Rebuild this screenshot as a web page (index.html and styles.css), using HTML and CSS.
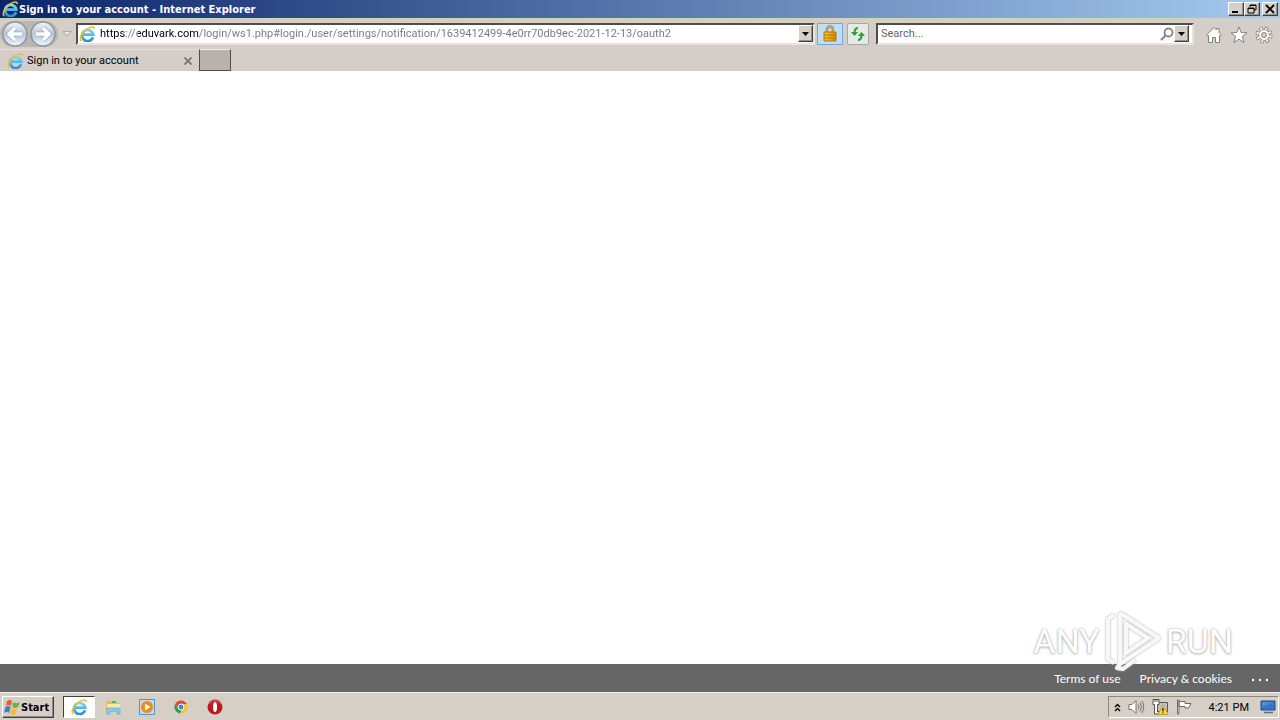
FILE: index.html
```html
<!DOCTYPE html>
<html lang="en">
<head>
<meta charset="utf-8">
<title>Sign in to your account</title>
<link rel="stylesheet" href="styles.css">
</head>
<body>
<svg class="defs" aria-hidden="true">
  <defs>
    <linearGradient id="blue" x1="0" y1="0" x2="0" y2="1"><stop offset="0" stop-color="#7ad8fa"/><stop offset="1" stop-color="#2a8fd8"/></linearGradient>
    <linearGradient id="disc" x1="0" y1="0" x2="0" y2="1"><stop offset="0" stop-color="#f4f6fa"/><stop offset=".5" stop-color="#b9c6da"/><stop offset="1" stop-color="#eef8fc"/></linearGradient>
    <linearGradient id="gold" x1="0" y1="0" x2="1" y2="0"><stop offset="0" stop-color="#f8c830"/><stop offset="1" stop-color="#d08808"/></linearGradient>
    <symbol id="ie" viewBox="0 0 16 16">
      <path d="M14 11.200A5.600 5.600 0 1 1 14.200 8.600H4.500" fill="none" stroke="url(#blue)" stroke-width="2.800"/>
      <path d="M2.500 15C-.8 13.500 3 6.500 7.500 3.300c4-2.800 8-3.400 7.500-.1" fill="none" stroke="#f0bd24" stroke-width="1.600"/>
    </symbol>
  </defs>
</svg>
<div class="window">
  <header class="titlebar">
    <svg class="icon16"><use href="#ie"/></svg>
    <h1 class="title">Sign in to your account - Internet Explorer</h1>
    <div class="winbuttons">
      <button class="winbtn" aria-label="Minimize"><svg width="12" height="10"><path d="M2 8h6" stroke="#000" stroke-width="2"/></svg></button>
      <button class="winbtn" aria-label="Restore"><svg width="12" height="10"><path d="M4 3V1h6v5H8M4 1.500h6M2 4h6v5H2zM2 4.500h6" fill="none" stroke="#000"/></svg></button>
      <button class="winbtn close" aria-label="Close"><svg width="12" height="10"><path d="M2 1l8 8M10 1L2 9" stroke="#000" stroke-width="1.800"/></svg></button>
    </div>
  </header>
  <nav class="navbar" aria-label="Browser">
    <div class="history">
      <button class="round" aria-label="Back"><svg width="26" height="26"><circle cx="13" cy="13" r="12" fill="url(#disc)" stroke="#8f959e" stroke-width="1.500"/><path d="M13 7l-6 6 6 6M8 13h12" fill="none" stroke="#9aa9c0" stroke-width="5"/><path d="M13 7l-6 6 6 6M8 13h12" fill="none" stroke="#fff" stroke-width="3.400"/></svg></button>
      <button class="round" aria-label="Forward"><svg width="26" height="26"><circle cx="13" cy="13" r="12" fill="url(#disc)" stroke="#8f959e" stroke-width="1.500"/><path d="M13 7l6 6-6 6M18 13H6" fill="none" stroke="#9aa9c0" stroke-width="5"/><path d="M13 7l6 6-6 6M18 13H6" fill="none" stroke="#fff" stroke-width="3.400"/></svg></button>
    </div>
    <button class="plain recent" aria-label="Recent pages"><svg width="10" height="6"><path d="M1 .5h8L5 5z" fill="#e8e4df" stroke="#aaa6a2"/></svg></button>
    <div class="field address">
      <svg class="icon16"><use href="#ie"/></svg>
      <input class="url" aria-label="Address" value="https://eduvark.com/login/ws1.php#login./user/settings/notification/1639412499-4e0rr70db9ec-2021-12-13/oauth2">
      <button class="drop" aria-label="Show addresses"><svg width="7" height="4"><path d="M0 0h7L3.500 4z"/></svg></button>
    </div>
    <button class="lock" aria-label="Security report"><svg width="14" height="17"><path d="M4 8V4.500a3 3 0 0 1 6 0V8" fill="none" stroke="#8c7a48" stroke-width="2.400"/><path d="M4 8V4.500a3 3 0 0 1 6 0V8" fill="none" stroke="#e6d9a0" stroke-width=".8"/><path d="M1 7h12v9H1z" fill="url(#gold)" stroke="#b07a10"/><path d="M1 10h12M1 13h12" stroke="#b8780c"/></svg></button>
    <button class="refresh" aria-label="Refresh"><svg width="14" height="14"><path d="M7 1C4 1 3.500 3 3.500 6M7 13c3 0 3.500-2 3.500-5" fill="none" stroke="#2f9a35" stroke-width="2"/><path d="M0 5h7L3.500 9zM7 9h7l-3.500-4z" fill="#2f9a35"/></svg></button>
    <div class="field search">
      <input class="query" aria-label="Search" placeholder="Search...">
      <button class="plain" aria-label="Search"><svg width="14" height="14"><circle cx="8.500" cy="5.500" r="4" fill="#fff" stroke="#85858b" stroke-width="1.800"/><path d="M5.500 8.500L1 13" stroke="#85858b" stroke-width="2.200"/></svg></button>
      <button class="drop" aria-label="Search providers"><svg width="7" height="4"><path d="M0 0h7L3.500 4z"/></svg></button>
    </div>
    <div class="tools">
      <button class="plain" aria-label="Home"><svg width="18" height="18"><path d="M1.500 9L9 1.500l2.500 2.500V2.500h2.500V6.500L16.500 9l-1 1-1-.5v7h-4v-5h-3v5h-4v-7l-1 .5z" fill="#fff" stroke="#85817d"/></svg></button>
      <button class="plain" aria-label="Favorites"><svg width="18" height="18"><path d="M9 1l2.200 5.500 5.800.3-4.500 3.700L14 16.500 9 13.200 4 16.500l1.500-6L1 6.800l5.800-.3z" fill="#fff" stroke="#85817d"/></svg></button>
      <button class="plain" aria-label="Tools"><svg width="18" height="18"><circle cx="9" cy="9" r="6.500" fill="none" stroke="#85817d" stroke-width="4" stroke-dasharray="3 2.100"/><circle cx="9" cy="9" r="5.500" fill="#fff" stroke="#85817d"/><circle cx="9" cy="9" r="6.500" fill="none" stroke="#fff" stroke-width="2.600" stroke-dasharray="1.600 3.500" stroke-dashoffset="-.7"/><circle cx="9" cy="9" r="2.500" fill="#d5cec6" stroke="#85817d"/></svg></button>
    </div>
  </nav>
  <div class="tabs">
    <div class="tab"><svg class="icon16"><use href="#ie"/></svg><span class="tabname">Sign in to your account</span><button class="plain" aria-label="Close tab"><svg width="8" height="8"><path d="M.5.5l7 7M7.500.5l-7 7" stroke="#77736f" stroke-width="1.800"/></svg></button></div>
    <button class="newtab" aria-label="New tab"></button>
  </div>
  <main class="page">
    <div class="watermark" aria-hidden="true">
      <span>ANY</span>
      <svg width="58" height="62" viewBox="0 0 58 62"><path class="mark" d="M16 3l39 25L16 54V3M22 14l22 14-22 15zM10 5L4 9v40l6 4M16 54l-3 4 6 1 12-9"/></svg>
      <span>RUN</span>
    </div>
  </main>
  <footer class="legal">
    <a class="link" href="#terms">Terms of use</a>
    <a class="link" href="#privacy">Privacy &amp; cookies</a>
    <button class="more" aria-label="More"><svg width="18" height="4" fill="#fff"><circle cx="2" cy="2" r="1.200"/><circle cx="9" cy="2" r="1.200"/><circle cx="16" cy="2" r="1.200"/></svg></button>
  </footer>
  <div class="taskbar">
    <button class="start"><svg width="17" height="16"><path d="M3 2q3-2 5 0L7 7Q4 5 2 7z" fill="#e9602c"/><path d="M9 3q3 2 7 0l-2 5q-3 2-5.500 0z" fill="#6eb33c"/><path d="M1.500 8q3-2 5 0L5 14q-2-2-5 0z" fill="#3b80cf"/><path d="M7.500 9q3 2 5.500 0l-1.500 6q-3 2-5.500 0z" fill="#f5bd2c"/></svg><span>Start</span></button>
    <div class="apps">
      <button class="app active" aria-label="Internet Explorer"><svg class="icon16"><use href="#ie"/></svg></button>
      <button class="app" aria-label="Windows Explorer"><svg width="16" height="16"><path d="M1 2h5l1 2h7v9H1z" fill="#e3bd58"/><path d="M2 5h13v7H2z" fill="#f9e9a2"/><path d="M7 2h4v2H7z" fill="#55b65d"/><path d="M2 15V9h13v6h-3v-3H5v3z" fill="#8ccbe9" stroke="#65a7cb" stroke-width=".7"/></svg></button>
      <button class="app" aria-label="Media Player"><svg width="16" height="16"><path d="M.5.5h15v15H.5z" fill="#b9ddf5" stroke="#5295ca"/><circle cx="8" cy="8" r="6" fill="#f38718"/><path d="M6 4.500L11.500 8 6 11.500z" fill="#fff"/></svg></button>
      <button class="app" aria-label="Chrome"><svg width="14" height="14"><circle cx="7" cy="7" r="6.500" fill="#f5c52c"/><path d="M1.400 3.700A6.500 6.500 0 0 1 12.700 4H7L4 8.500z" fill="#dc4a3c"/><path d="M1.400 3.700L4 8.500l3.500 1.500L6 13.500A6.500 6.500 0 0 1 1.400 3.700z" fill="#2e9d58"/><circle cx="7" cy="7" r="3" fill="#4384ea" stroke="#fff"/></svg></button>
      <button class="app" aria-label="Opera"><svg width="16" height="16"><circle cx="8" cy="8" r="7.500" fill="#bd1a20"/><path d="M2 5q6-7 12 0" fill="none" stroke="#df6a6a"/><ellipse cx="8" cy="8" rx="2" ry="5" fill="#fff"/></svg></button>
    </div>
    <div class="tray">
      <button class="plain" aria-label="Show hidden icons"><svg width="7" height="9"><path d="M1 4l2.500-2.500L6 4M1 8l2.500-2.500L6 8" fill="none" stroke="#000" stroke-width="1.400"/></svg></button>
      <button class="plain" aria-label="Volume"><svg width="17" height="16"><path d="M1 5.500h3l4-4v13l-4-4H1z" fill="#fff" stroke="#77736f"/><path d="M10 5.500q2 2.500 0 5M12 3.500q3 4.500 0 9M14 2q3.500 6 0 12" fill="none" stroke="#77736f"/></svg></button>
      <button class="plain" aria-label="Network"><svg width="17" height="16"><path d="M5.500 3.500h10v9h-10z" fill="#c2c0bd" stroke="#5c5a58"/><path d="M1 .5h6v5H5.500V13H9v2H2.500V5.500H1z" fill="#fff" stroke="#55524e"/><path d="M3 .5v2.500M5 .5v2.500" stroke="#55524e"/><path d="M11 6l5 9.500H6z" fill="#fcdc30" stroke="#b5941c" stroke-width=".7"/><path d="M11 9v3.500M11 13.500v1" stroke="#222" stroke-width="1.300"/></svg></button>
      <button class="plain" aria-label="Action Center"><svg width="17" height="16"><path d="M1.500 1h1.500v14H1.500zM3 2.500h6v2h6L12.500 9H9V7.500H3z" fill="#fff" stroke="#6c6864"/></svg></button>
      <time class="clock">4:21 PM</time>
      <button class="plain" aria-label="Show desktop"><svg width="16" height="14"><path d="M1 1h14v9H1z" fill="#3477c8" stroke="#204a83"/><path d="M2 2h12L2 7z" fill="#4c8dd4"/><path d="M4 12.500h9" stroke="#5c6f85" stroke-width="1.500"/></svg></button>
    </div>
  </div>
</div>
</body>
</html>
```
FILE: styles.css
```css
* { box-sizing: border-box; }
body { margin: 0; background: #fff; font-family: Roboto, Tahoma, sans-serif; font-size: 11px; color: #000; }
button, input { font: inherit; color: inherit; border: 0; border-radius: 0; padding: 0; margin: 0; }
svg { display: block; flex: none; }
.defs { position: absolute; width: 0; height: 0; }
.icon16 { width: 16px; height: 16px; }
.window { display: flex; flex-direction: column; min-height: 100vh; }
.plain { background: none; display: flex; align-items: center; justify-content: center; }

.titlebar { display: flex; align-items: center; height: 18px; padding: 0 2px; background: linear-gradient(to right, #0a246a, #a6caf0); }
.title { flex: 1; margin: 0 0 0 1px; font: bold 11px "DejaVu Sans Condensed", Tahoma, sans-serif; color: #fff; white-space: nowrap; }
.winbuttons { display: flex; }
.winbtn { display: flex; align-items: center; justify-content: center; width: 16px; height: 14px; background: #d6d0c8; border: 1px solid; border-color: #fff #404040 #404040 #fff; box-shadow: inset -1px -1px #96918b; }
.close { margin-left: 2px; }

.navbar { display: flex; align-items: center; height: 31px; background: linear-gradient(#d5d0bf, #d5cec8 5px); }
.history { display: flex; gap: 2px; padding: 0 2px; background: #bab6b3; border-radius: 14px; }
.round { background: none; }
.recent { width: 18px; }
.field { display: flex; align-items: center; height: 22px; background: #fff; border: 2px solid; border-color: #504c50 #e8e3de #e8e3de #504c50; }
.address { flex: 1; margin-right: 2px; padding-left: 1px; }
.url { flex: 1; min-width: 0; height: 18px; margin-left: 5px; outline: 0; color: transparent; background: linear-gradient(to right, #000 26px, #777 26px 38px, #000 38px 98px, #777 98px); -webkit-background-clip: text; background-clip: text; }
.drop { display: flex; align-items: center; justify-content: center; width: 15px; height: 17px; background: #d6d0c8; border: 1px solid; border-color: #fff #404040 #404040 #fff; box-shadow: inset -1px -1px #96918b; }
.lock, .refresh { display: flex; align-items: center; justify-content: center; height: 22px; }
.lock { width: 26px; background: #c5dcf5; border: 1px solid #74a6dc; margin-right: 4px; }
.refresh { width: 22px; background: #e4e9e5; border: 1px solid #aaa6a6; border-radius: 2px; margin-right: 7px; }
.search { width: 25%; max-width: 318px; padding-right: 3px; }
.query { flex: 1; min-width: 0; height: 18px; padding-left: 3px; outline: 0; background: none; }
.query::placeholder { color: #666; opacity: 1; }
.tools { display: flex; gap: 7px; padding: 3px 7px 0 11px; }

.tabs { display: flex; height: 22px; background: #d5cec8; }
.tab { display: flex; align-items: center; width: 198px; padding: 0 6px 0 7px; border-top: 1px solid #e6e1dc; }
.tabname { flex: 1; margin-left: 4px; white-space: nowrap; }
.newtab { width: 32px; background: #bab1ac; border: 1px solid #504c4a; border-top-color: #eee; margin-left: 1px; }

.page { position: relative; flex: 1; background: #fff; }
.watermark { position: absolute; z-index: 1; right: 47px; bottom: -8px; display: flex; align-items: center; gap: 4px; font: 34px Roboto, Arial, sans-serif; color: #fff; text-shadow: 0 0 2px #aaa, 0 1px 3px #bbb; }
.mark { fill: none; stroke: #f8f8f8; stroke-width: 4; stroke-linejoin: round; filter: drop-shadow(0 0 1px #aaa); }

.legal { display: flex; align-items: center; justify-content: flex-end; gap: 19px; height: 28px; padding-right: 11px; background: #666; font-family: Lato, "Segoe UI", sans-serif; font-size: 12px; }
.link { color: #fff; text-decoration: none; }
.more { background: none; padding-top: 4px; }

.taskbar { display: flex; align-items: center; height: 28px; padding: 1px 1px 0 2px; background: #d6cfc6; border-top: 1px solid #f5f2ee; }
.start { display: flex; align-items: center; width: 52px; height: 22px; padding: 0 1px; font: bold 11px "DejaVu Sans Condensed", Tahoma, sans-serif; background: #d6cfc6; border: 1px solid; border-color: #fff #404040 #404040 #fff; box-shadow: inset -1px -1px #918c86; }
.apps { display: flex; gap: 2px; margin-left: 9px; }
.app { display: flex; align-items: center; justify-content: center; width: 32px; height: 22px; background: none; }
.active { background: #fff; border: 1px solid; border-color: #404040 #fff #fff #404040; }
.tray { display: flex; align-items: center; gap: 7px; height: 22px; margin-left: auto; padding: 0 2px 0 5px; border: 1px solid; border-color: #8d8781 #fff #fff #8d8781; }
.clock { margin: 0 4px 0 9px; }
```
